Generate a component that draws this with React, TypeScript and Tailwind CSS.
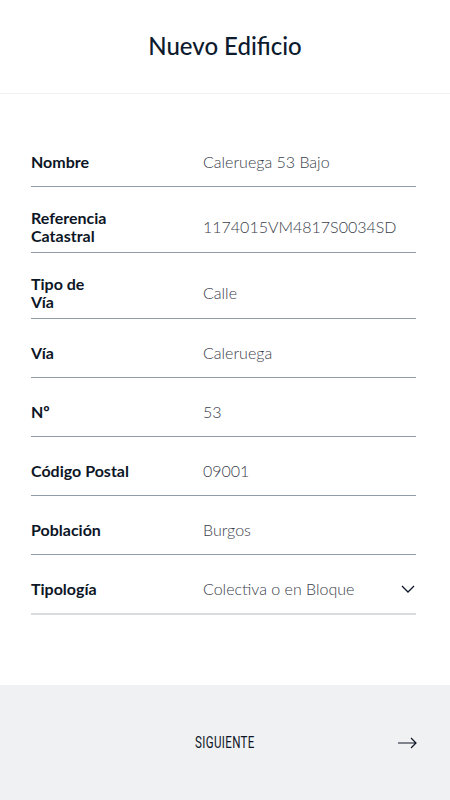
type Field = {
  label: string[];
  value: string;
  select?: boolean;
};

const fields: Field[] = [
  { label: ["Nombre"], value: "Caleruega 53 Bajo" },
  { label: ["Referencia", "Catastral"], value: "1174015VM4817S0034SD" },
  { label: ["Tipo de", "Vía"], value: "Calle" },
  { label: ["Vía"], value: "Caleruega" },
  { label: ["Nº"], value: "53" },
  { label: ["Código Postal"], value: "09001" },
  { label: ["Población"], value: "Burgos" },
  { label: ["Tipología"], value: "Colectiva o en Bloque", select: true },
];

const Row = ({ field }: { field: Field }) => {
  const twoLines = field.label.length > 1;
  return (
    <div
      className={`flex items-center ${
        twoLines ? "pt-[22px] pb-[7px]" : "pt-6 pb-[14px]"
      } ${field.select ? "border-b-2 border-[#d9dcdf]" : "border-b border-[#8f9ba7]"}`}
    >
      <div
        className={`w-[172px] shrink-0 text-[16px] font-bold text-[#0d1626] ${
          twoLines ? "leading-[18px]" : "leading-5"
        }`}
      >
        {field.label.map((l) => (
          <div key={l}>{l}</div>
        ))}
      </div>
      <div className="flex-1 text-[16px] leading-5 font-light text-[#3a404b]">
        {field.value}
      </div>
      {field.select && (
        <svg width="14" height="8" viewBox="0 0 14 8" fill="none" stroke="#0d1626" strokeWidth="1.3" className="mr-[1px]">
          <path d="M1 1l6 6 6-6" />
        </svg>
      )}
    </div>
  );
};

const App = () => {
  return (
    <div className="w-[450px] h-[800px] bg-white flex flex-col font-['Lato',sans-serif]">
      <header className="h-[94px] shrink-0 flex items-center justify-center border-b border-[#f2f2f2]">
        <h1 className="text-[24px] font-medium text-[#0d1b2e] -mt-[1px]">Nuevo Edificio</h1>
      </header>

      <main className="flex-1 pl-[31px] pr-[34px] pt-[34px]">
        {fields.map((f) => (
          <Row key={f.label.join(" ")} field={f} />
        ))}
      </main>

      <footer className="h-[115px] shrink-0 bg-[#f0f1f3] flex items-center relative">
        <span className="mx-auto inline-block scale-x-[0.68] text-[17px] tracking-[0.5px] text-[#0d1626] font-['Roboto',sans-serif]">
          SIGUIENTE
        </span>
        <svg
          className="absolute right-[33px] top-1/2 -translate-y-1/2"
          width="19"
          height="12"
          viewBox="0 0 19 12"
          fill="none"
          stroke="#0d1626"
          strokeWidth="1.2"
        >
          <path d="M0 6h18M13 1l5 5-5 5" />
        </svg>
      </footer>
    </div>
  );
};

export default App;
